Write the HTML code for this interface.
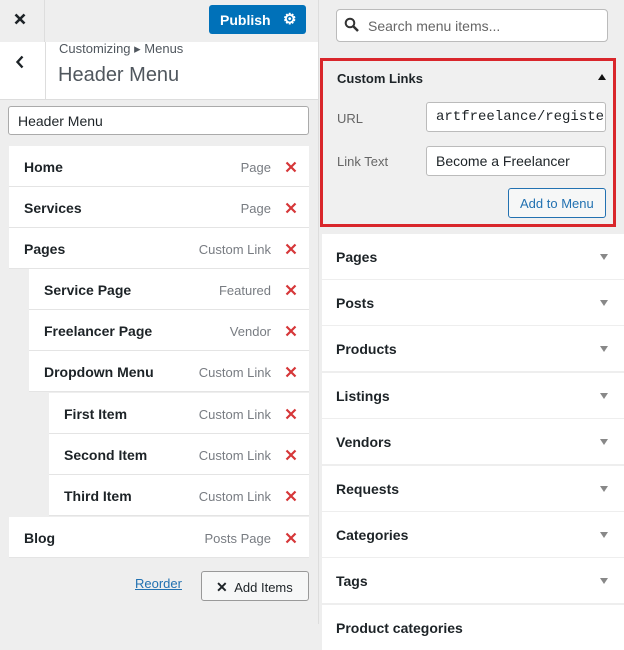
<!DOCTYPE html><html><head><style>
*{box-sizing:border-box;margin:0;padding:0}
body{width:624px;height:624px;overflow:hidden;background:#eeeeee;font-family:"Liberation Sans",sans-serif;position:relative;color:#1d2327}
.a{position:absolute}
.row{position:absolute;left:9px;width:300px;height:41px;background:#fff;border-bottom:1px solid #e4e4e4;font-size:14px;font-weight:bold}
.row .t{position:absolute;left:15px;top:13px}
.row .k{position:absolute;right:38px;top:14px;font-size:13px;font-weight:normal;color:#787c82}
.row .x{position:absolute;right:12px;top:15px}
.acc{position:absolute;left:322px;width:302px;height:45px;background:#fff;font-size:14px;font-weight:bold}
.acc span{position:absolute;left:14px;top:15px}
.acc i{position:absolute;right:16px;top:20px;width:0;height:0;border-left:4px solid transparent;border-right:4px solid transparent;border-top:6px solid #888}
</style></head><body>
<svg width="0" height="0" style="position:absolute"><defs><symbol id="rx" viewBox="0 0 12 12"><path d="M1.5 1.5L10.5 10.5M10.5 1.5L1.5 10.5" stroke="#d63638" stroke-width="2.2"/></symbol></defs></svg>
<div class="a" style="left:0;top:0;width:318px;height:42px;background:#eeeeee"></div>
<div class="a" style="left:44px;top:0;width:1px;height:100px;background:#ddd"></div>
<svg class="a" style="left:14px;top:13px" width="12" height="12"><path d="M1.5 1.5L10.5 10.5M10.5 1.5L1.5 10.5" stroke="#1d2327" stroke-width="2.6"/></svg>
<div class="a" style="left:209px;top:5px;width:97px;height:29px;background:#0071b9;border-radius:3px;color:#fff;font-size:14px;font-weight:bold"><span class="a" style="left:11px;top:7px">Publish</span><span class="a" style="left:74px;top:5px;font-size:15px">⚙</span></div>
<div class="a" style="left:0;top:42px;width:318px;height:58px;background:#fff;border-bottom:1px solid #ddd"></div>
<div class="a" style="left:45px;top:42px;width:1px;height:58px;background:#ddd"></div>
<svg class="a" style="left:15px;top:55px" width="10" height="14"><path d="M7.5 1.5L2.5 7L7.5 12.5" fill="none" stroke="#1d2327" stroke-width="2.4"/></svg>
<div class="a" style="left:59px;top:41px;font-size:13px;color:#50575e">Customizing ▸ Menus</div>
<div class="a" style="left:58px;top:64px;font-size:20px;color:#50575e">Header Menu</div>
<div class="a" style="left:8px;top:106px;width:301px;height:29px;background:#fff;border:1px solid #aaa;border-radius:3px;font-size:14px;padding:6px 9px">Header Menu</div>
<div class="row" style="top:146px"><span class="t">Home</span><span class="k">Page</span><svg class="x" width="12" height="12"><use href="#rx"/></svg></div>
<div class="row" style="top:187px"><span class="t">Services</span><span class="k">Page</span><svg class="x" width="12" height="12"><use href="#rx"/></svg></div>
<div class="row" style="top:228px"><span class="t">Pages</span><span class="k">Custom Link</span><svg class="x" width="12" height="12"><use href="#rx"/></svg></div>
<div class="row" style="top:269px;left:29px;width:280px"><span class="t">Service Page</span><span class="k">Featured</span><svg class="x" width="12" height="12"><use href="#rx"/></svg></div>
<div class="row" style="top:310px;left:29px;width:280px"><span class="t">Freelancer Page</span><span class="k">Vendor</span><svg class="x" width="12" height="12"><use href="#rx"/></svg></div>
<div class="row" style="top:351px;left:29px;width:280px"><span class="t">Dropdown Menu</span><span class="k">Custom Link</span><svg class="x" width="12" height="12"><use href="#rx"/></svg></div>
<div class="row" style="top:393px;left:49px;width:260px"><span class="t">First Item</span><span class="k">Custom Link</span><svg class="x" width="12" height="12"><use href="#rx"/></svg></div>
<div class="row" style="top:434px;left:49px;width:260px"><span class="t">Second Item</span><span class="k">Custom Link</span><svg class="x" width="12" height="12"><use href="#rx"/></svg></div>
<div class="row" style="top:475px;left:49px;width:260px"><span class="t">Third Item</span><span class="k">Custom Link</span><svg class="x" width="12" height="12"><use href="#rx"/></svg></div>
<div class="row" style="top:517px"><span class="t">Blog</span><span class="k">Posts Page</span><svg class="x" width="12" height="12"><use href="#rx"/></svg></div>
<div class="a" style="left:135px;top:576px;font-size:13px;color:#2271b1;text-decoration:underline">Reorder</div>
<div class="a" style="left:201px;top:571px;width:108px;height:30px;background:#f6f7f7;border:1px solid #999;border-radius:3px;font-size:13px;padding:7px 0 0 14px"><b style="font-size:14px">✕</b>&nbsp; Add Items</div>
<div class="a" style="left:318px;top:0;width:1px;height:624px;background:#ddd"></div>
<div class="a" style="left:336px;top:9px;width:272px;height:33px;background:#fff;border:1px solid #bbb;border-radius:4px;font-size:14px;color:#666;padding:8px 0 0 31px">Search menu items...</div>
<svg class="a" style="left:344px;top:17px" width="16" height="16"><circle cx="6" cy="6" r="4.3" fill="none" stroke="#333" stroke-width="2"/><line x1="9" y1="9" x2="14" y2="14" stroke="#333" stroke-width="2.5"/></svg>
<div class="a" style="left:320px;top:58px;width:296px;height:169px;border:3px solid #d9262b;background:#f0f0f0"></div>
<div class="a" style="left:337px;top:71px;font-size:13px;font-weight:bold">Custom Links</div>
<div class="a" style="left:598px;top:74px;width:0;height:0;border-left:4px solid transparent;border-right:4px solid transparent;border-bottom:6px solid #111"></div>
<div class="a" style="left:337px;top:111px;font-size:13px;color:#666">URL</div>
<div class="a" style="left:426px;top:102px;width:180px;height:30px;background:#fff;border:1px solid #bbb;border-radius:3px;font-family:'Liberation Mono',monospace;font-size:14px;padding:6px 9px;overflow:hidden;white-space:nowrap">artfreelance/register</div>
<div class="a" style="left:337px;top:154px;font-size:13px;color:#666">Link Text</div>
<div class="a" style="left:426px;top:146px;width:180px;height:30px;background:#fff;border:1px solid #bbb;border-radius:3px;font-size:14px;padding:6px 9px">Become a Freelancer</div>
<div class="a" style="left:508px;top:188px;width:98px;height:30px;background:#f6f7f7;border:1px solid #2271b1;border-radius:3px;font-size:13px;color:#2271b1;padding:7px 0 0 11px">Add to Menu</div>
<div class="acc" style="top:234px"><span>Pages</span><i></i></div>
<div class="acc" style="top:280px"><span>Posts</span><i></i></div>
<div class="acc" style="top:326px"><span>Products</span><i></i></div>
<div class="acc" style="top:373px"><span>Listings</span><i></i></div>
<div class="acc" style="top:419px"><span>Vendors</span><i></i></div>
<div class="acc" style="top:466px"><span>Requests</span><i></i></div>
<div class="acc" style="top:512px"><span>Categories</span><i></i></div>
<div class="acc" style="top:558px"><span>Tags</span><i></i></div>
<div class="acc" style="top:605px"><span>Product categories</span></div>
</body></html>
